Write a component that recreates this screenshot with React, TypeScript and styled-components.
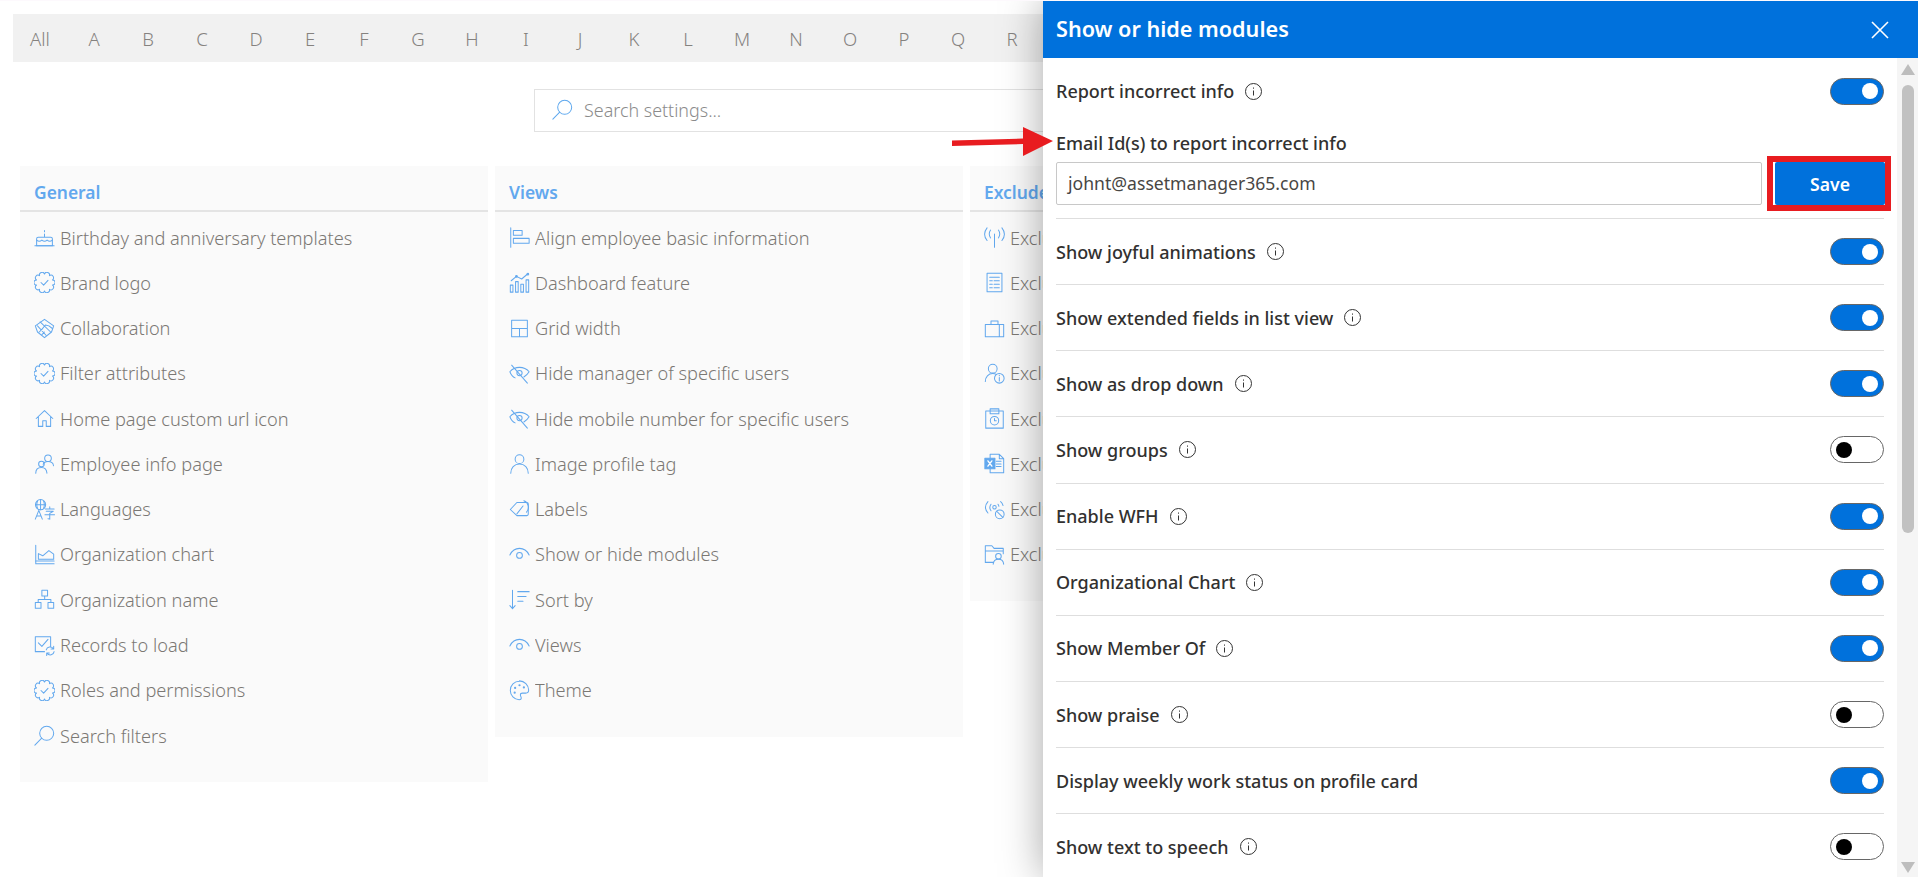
import React from "react";
import styled, { createGlobalStyle } from "styled-components";

const Global = createGlobalStyle`
  html, body { margin: 0; padding: 0; background: #fff; }
  body { border-top: 1px solid #fdf9fd; overflow: hidden; }
  * { box-sizing: border-box; }
`;
const FONT = `"Noto Sans", "Open Sans", "Liberation Sans", sans-serif`;

const Page = styled.div`
  position: relative;
  height: 876px;
  overflow: hidden;
  font-family: ${FONT};
`;
const Backdrop = styled.main`
  width: 1043px;
  overflow: hidden;
`;
const AlphaBar = styled.div`
  display: flex;
  align-items: center;
  height: 48px;
  margin: 13px 0 0 13px;
  background: #f1f1f1;
`;
const AlphaItem = styled.span`
  flex: 0 0 54px;
  text-align: center;
  font-size: 18.5px;
  font-weight: 300;
  color: #85827f;
`;
const SearchBox = styled.div`
  display: flex;
  align-items: center;
  gap: 11px;
  width: 850px;
  height: 43px;
  margin: 27px 0 0 534px;
  padding: 0 0 2px 17px;
  border: 1px solid #e2e2e2;
  background: #fff;
  color: #5ea8ee;
`;
const SearchText = styled.span`
  font-size: 17.9px;
  font-weight: 300;
  color: #8b8b8b;
  white-space: nowrap;
`;
const Cards = styled.div`
  display: grid;
  grid-template-columns: 468px 468px 73px;
  gap: 7px;
  align-items: start;
  margin-top: 34px;
  padding-left: 20px;
`;
const Card = styled.section`
  min-width: 0;
  overflow: hidden;
  background: #fafafa;
  padding-bottom: 24px;
`;
const CardTitle = styled.h3`
  height: 46px;
  margin: 0 0 3px;
  padding: 14px 0 0 14px;
  border-bottom: 2px solid #e4e4e4;
  font-size: 17.4px;
  line-height: 24px;
  font-weight: 600;
  color: #62a8ee;
  white-space: nowrap;
  overflow: hidden;
`;
const Item = styled.div`
  display: flex;
  align-items: center;
  gap: 5px;
  height: 45.27px;
  padding-left: 14px;
  color: #62a8ee;
`;
const ItemText = styled.span`
  min-width: 0;
  overflow: hidden;
  font-size: 18.2px;
  font-weight: 300;
  color: #7b7874;
  white-space: nowrap;
`;
const Glyph = styled.svg`
  flex: 0 0 21px;
  width: 21px;
  height: 21px;
  fill: none;
  stroke: currentColor;
  stroke-width: 1.15;
  stroke-linecap: round;
  stroke-linejoin: round;
`;
const Panel = styled.aside`
  position: absolute;
  top: 0;
  right: 0;
  bottom: 0;
  width: 875px;
  display: flex;
  flex-direction: column;
  background: #fff;
  box-shadow: 0 0 40px rgba(0, 0, 0, 0.35);
`;
const PanelHeader = styled.header`
  display: flex;
  align-items: center;
  justify-content: space-between;
  flex: 0 0 57px;
  padding: 0 29px 0 13px;
  background: #0071dc;
  color: #fff;
`;
const PanelTitle = styled.h2`
  margin: -2px 0 0;
  font-size: 21.6px;
  font-weight: 600;
`;
const CloseIcon = styled.svg`
  width: 18px;
  height: 18px;
  stroke: #fff;
  stroke-width: 1.6;
`;
const PanelBody = styled.div`
  flex: 1;
  display: flex;
  min-height: 0;
`;
const PanelContent = styled.div`
  flex: 1;
  min-width: 0;
  padding: 0 13px;
  overflow: hidden;
`;
const Row = styled.div<{ $plain?: boolean }>`
  display: flex;
  align-items: center;
  justify-content: space-between;
  height: ${(p) => (p.$plain ? "66px" : "66.15px")};
  border-bottom: ${(p) => (p.$plain ? "none" : "1px solid #dedede")};
`;
const RowLabel = styled.div`
  display: flex;
  align-items: center;
  gap: 10px;
  font-size: 18px;
  font-weight: 500;
  color: #323130;
`;
const InfoIcon = styled.svg`
  width: 19px;
  height: 19px;
  fill: none;
  stroke: #333;
  stroke-width: 1;
`;
const Toggle = styled.span<{ $on: boolean }>`
  display: flex;
  align-items: center;
  justify-content: ${(p) => (p.$on ? "flex-end" : "flex-start")};
  width: 54px;
  height: 27px;
  padding: 0 5px;
  border: 1px solid #666;
  border-radius: 14px;
  background: ${(p) => (p.$on ? "#0071dc" : "#fff")};
`;
const Knob = styled.span<{ $on: boolean }>`
  width: 16px;
  height: 16px;
  border-radius: 50%;
  background: ${(p) => (p.$on ? "#fff" : "#000")};
`;
const EmailBlock = styled.div`
  padding: 7px 0 13px;
  border-bottom: 1px solid #dedede;
`;
const EmailLabel = styled.label`
  display: block;
  margin-bottom: 7px;
  font-size: 18px;
  line-height: 24px;
  font-weight: 500;
  color: #323130;
`;
const EmailRow = styled.div`
  display: flex;
  gap: 13px;
  margin-right: -1px;
`;
const EmailInput = styled.div`
  flex: 1;
  height: 43px;
  padding: 0 11px;
  border: 1px solid #c8c8c8;
  border-radius: 2px;
  font-size: 17.6px;
  line-height: 41px;
  color: #484644;
`;
const SaveButton = styled.button`
  position: relative;
  flex: 0 0 110px;
  height: 43px;
  border: 0;
  border-radius: 2px;
  background: #0071dc;
  color: #fff;
  font-family: ${FONT};
  font-size: 17.6px;
  font-weight: 600;
`;
const Highlight = styled.span`
  position: absolute;
  top: -6px;
  bottom: -6px;
  left: -8px;
  right: -6px;
  border: 6px solid #e81c20;
`;
const ArrowMark = styled.svg`
  position: absolute;
  left: 952px;
  top: 124px;
  width: 102px;
  height: 32px;
  fill: #e81c20;
`;
const ScrollTrack = styled.div`
  flex: 0 0 21px;
  display: flex;
  flex-direction: column;
  align-items: center;
  padding: 6px 0 4px 1px;
  background: #f5f5f5;
`;
const ScrollThumb = styled.div`
  width: 12px;
  height: 448px;
  margin-top: 10px;
  border-radius: 6px;
  background: #c1c1c1;
`;
const ScrollArrow = styled.svg<{ $down?: boolean }>`
  width: 14px;
  height: 11px;
  fill: #bdbdbd;
  margin-top: ${(p) => (p.$down ? "auto" : "0")};
`;

const scallop = (() => {
  const n = 10;
  const R = 9.6;
  const pts = Array.from({ length: n }, (_, i) => {
    const a = (i / n) * Math.PI * 2 - Math.PI / 2;
    return [12 + R * Math.cos(a), 12 + R * Math.sin(a)];
  });
  const r = 2.9;
  return (
    `M${pts[0][0].toFixed(2)} ${pts[0][1].toFixed(2)}` +
    pts
      .slice(1)
      .concat([pts[0]])
      .map((p) => `A${r} ${r} 0 0 1 ${p[0].toFixed(2)} ${p[1].toFixed(2)}`)
      .join("") +
    "Z"
  );
})();

const badge = (
  <>
    <path d={scallop} />
    <path d="m8 12 3 3 5-5.500" />
  </>
);
const eye = (
  <>
    <path d="M1 12.500C3.500 7.500 7.500 5 12 5s8.500 2.500 11 7.500" />
    <circle cx="12" cy="13" r="3.300" />
  </>
);
const eyeOff = (
  <>
    <path d="M1 10c3-3.500 7-5 11-5s8 1.500 11 5c-1.500 2.500-3.500 4.500-6 6M7 17c-2.500-1-4.500-3-6-7" />
    <circle cx="12" cy="11.500" r="3" />
    <path d="M3 2.500 21 23" />
  </>
);
const icons: Record<string, React.ReactNode> = {
  cake: (
    <>
      <path d="M1 21.500h22M3 21V13.500c0-1 .8-1.800 1.800-1.800h14.400c1 0 1.800.8 1.800 1.800V21M12 8v3.500M12 4v1.500" />
      <path d="M3 15c2 1.800 4 1.800 6 0 2 1.800 4 1.800 6 0 2 1.800 4 1.800 6 0M3 21.500h18" />
    </>
  ),
  badge,
  shake: (
    <>
      <path d="M12 1.500 22.500 9 20 16 12 22.500 4 16 1.500 9Z" />
      <path d="M7 4.500 19 16M4 9l10 11M9 13l4-5 4 1 4 3M6 16l3-3M9 19l3-3" />
    </>
  ),
  home: <path d="M2.500 12 12 3l9.500 9M5 10v11h5v-6.500h4V21h5V10" />,
  people: (
    <>
      <circle cx="16" cy="6" r="3.800" />
      <path d="M10.500 13c.5-2 2.500-3.300 5.500-3.300 3.800 0 6 2 6.300 4.800" />
      <circle cx="8.500" cy="12.500" r="3.200" />
      <path d="M2 23c0-4 2.500-6.500 6.500-6.500s6 2.500 6.300 6.500" />
    </>
  ),
  lang: (
    <>
      <circle cx="7.500" cy="6.500" r="5.800" />
      <path d="M1.700 6.500h11.600M7.500.7v11.600M4 2.500c-1 2.500-1 5.500 0 8M11 2.500c1 2.500 1 5.500 0 8" />
      <path d="M1.500 23 5.500 13l4 10M3 19.500h5M13 11.500h10M18 9v2M14 14h8l-4 2.500V23l-2-.5M12.500 18h11" />
    </>
  ),
  areachart: (
    <>
      <path d="M2 1.500V22.500H23" />
      <path d="M2 19.500h21M5 17.500V11l5 2.500 7-6 5.500 4v6Z" />
    </>
  ),
  org: (
    <path d="M9 1.500h6.500V8H9ZM1.500 15.500H8V22H1.500ZM16 15.500h6.500V22H16ZM12.200 8v4M4.800 15.500V12h14.500v3.500" />
  ),
  records: (
    <>
      <path d="M19 13V2H1.500v17H12" />
      <path d="m5 9 4 4 7-8" />
      <path d="M14 17a4.500 4.500 0 0 1 8-1.500M23 19a4.500 4.500 0 0 1-8 2M22.500 13v3h-3M14.500 23.500v-3h3" />
    </>
  ),
  search: (
    <>
      <circle cx="14.500" cy="9.500" r="8" />
      <path d="M8.800 15 1 23" />
    </>
  ),
  align: (
    <path d="M2 1v22M5 4h10v5.500H5ZM5 13h18v5.500H5Z" />
  ),
  dash: (
    <>
      <path d="M1.500 15h3v8h-3ZM7.500 11h3v12h-3ZM13.500 14h3v9h-3ZM19.500 9h3v14h-3Z" />
      <path d="M2.500 10 8.500 5l6 3 7-6" />
      <circle cx="8.500" cy="5" r="1" />
      <circle cx="21.500" cy="2.500" r="1" />
    </>
  ),
  grid: <path d="M3 2.500h18v19H3ZM3 12h18M12 12v9.500" />,
  eyeOff,
  user: (
    <>
      <circle cx="12" cy="7" r="5" />
      <path d="M2 23c0-6 4-10.500 10-10.500s10 4.500 10 10.500" />
    </>
  ),
  tag: (
    <>
      <path d="M1.500 12 9 4h11.500c1 0 1.500.5 1.500 1.500v12c0 1-.5 1.500-1.500 1.500H9Z" />
      <path d="M17 2a8 8 0 0 1 3 13M16 8 9 17" />
    </>
  ),
  eye,
  sort: (
    <path d="M4 1.500v21M1 19l3 3.500L7 19M10 3h13M10 8.500h9.500M10 14h6" />
  ),
  palette: (
    <>
      <path d="M12 1.500C6 1.500 1.500 6 1.500 12c0 5.500 4.500 10.500 10 10.500 2 0 2.500-1 2.500-2 0-1.500-1-2-1-3.500s1-2 2.500-2H19c2 0 3.500-1.500 3.500-3.500 0-5.500-5-10.500-10.500-10.500Z" />
      <circle cx="7" cy="9" r=".7" />
      <circle cx="12" cy="6" r=".7" />
      <circle cx="17" cy="8.500" r=".7" />
      <circle cx="6.500" cy="14.500" r=".7" />
    </>
  ),
  antenna: (
    <path d="M12 8v15M7.500 3.500c-2 3-2 6 0 9M16.500 3.500c2 3 2 6 0 9M3.500 1c-3.500 4.500-3.500 10 0 14.500M20.500 1c3.500 4.500 3.500 10 0 14.500" />
  ),
  doc: (
    <path d="M3.500 1.500h17v21h-17ZM6.500 6h11M6.500 10h3M11.500 10h6M6.500 14h3M11.500 14h6M6.500 18h3M11.500 18h6" />
  ),
  case: (
    <path d="M1.500 7.500h21v14h-21ZM8 7.500V3.500h8v4M17.500 7.500v14" />
  ),
  userInfo: (
    <>
      <circle cx="10" cy="6.500" r="5" />
      <path d="M1.500 21c0-5 3.500-9 8.500-9 1.500 0 3 .4 4 1" />
      <circle cx="17.500" cy="17.500" r="5.500" />
      <path d="M17.500 16.500v4M17.500 14v.6" />
    </>
  ),
  saveClock: (
    <>
      <path d="M2 3.500h20v19.500H2ZM7 3.500V1h10v5.500H7Z" />
      <circle cx="12" cy="14.500" r="4.800" />
      <path d="M12 12v2.500h2" />
    </>
  ),
  excel: (
    <>
      <path d="M7 6V1.500h10.500L22.500 6.500V22.500H7V18M17.500 1.500v5h5M14 9.500h5.500M14 12.500h5.500M14 15.500h5.500" />
      <path d="M1 6h11.500v12H1Z" fill="currentColor" />
      <path d="m4.500 9 4.500 6M9 9l-4.500 6" stroke="#fff" strokeWidth="1.600" />
    </>
  ),
  broadcast: (
    <>
      <path d="M4.500 3c-3.500 4-3.500 9 0 13M8 6c-1.800 2.500-1.800 5 0 7.500M19 3c1.500 1.200 2.300 2.800 2.800 4.500M16 6c.5.700 1 1.500 1 2.200" />
      <circle cx="12" cy="9.500" r="2" />
      <circle cx="18" cy="17.500" r="5" />
      <path d="m14.500 14 7 7" />
    </>
  ),
  folderUser: (
    <>
      <path d="M11 21H1.500V2H9l2.500 3h10.500v6M1.500 8h20.500" />
      <circle cx="16.500" cy="14" r="3.200" />
      <path d="M10.500 23c.3-3 2.500-5.500 6-5.500s5.700 2.500 6 5.500" />
    </>
  ),
};

const Icon = ({ name }: { name: string }) => (
  <Glyph viewBox="0 0 24 24" aria-hidden="true">
    {icons[name]}
  </Glyph>
);

type Entry = [string, string];
const general: Entry[] = [
  ["cake", "Birthday and anniversary templates"],
  ["badge", "Brand logo"],
  ["shake", "Collaboration"],
  ["badge", "Filter attributes"],
  ["home", "Home page custom url icon"],
  ["people", "Employee info page"],
  ["lang", "Languages"],
  ["areachart", "Organization chart"],
  ["org", "Organization name"],
  ["records", "Records to load"],
  ["badge", "Roles and permissions"],
  ["search", "Search filters"],
];
const views: Entry[] = [
  ["align", "Align employee basic information"],
  ["dash", "Dashboard feature"],
  ["grid", "Grid width"],
  ["eyeOff", "Hide manager of specific users"],
  ["eyeOff", "Hide mobile number for specific users"],
  ["user", "Image profile tag"],
  ["tag", "Labels"],
  ["eye", "Show or hide modules"],
  ["sort", "Sort by"],
  ["eye", "Views"],
  ["palette", "Theme"],
];
const exclude: Entry[] = [
  ["antenna", "Exclude"],
  ["doc", "Exclude"],
  ["case", "Exclude"],
  ["userInfo", "Exclude"],
  ["saveClock", "Exclude"],
  ["excel", "Exclude"],
  ["broadcast", "Exclude"],
  ["folderUser", "Exclude"],
];
const columns: [string, Entry[]][] = [
  ["General", general],
  ["Views", views],
  ["Exclude", exclude],
];
const rows: [string, boolean, boolean][] = [
  ["Show joyful animations", true, true],
  ["Show extended fields in list view", true, true],
  ["Show as drop down", true, true],
  ["Show groups", false, true],
  ["Enable WFH", true, true],
  ["Organizational Chart", true, true],
  ["Show Member Of", true, true],
  ["Show praise", false, true],
  ["Display weekly work status on profile card", true, false],
  ["Show text to speech", false, true],
];

const Info = () => (
  <InfoIcon viewBox="0 0 19 19" aria-hidden="true">
    <circle cx="9.500" cy="9.500" r="8" />
    <path d="M9.500 8.500v5M9.500 5.500v1.200" />
  </InfoIcon>
);
const Switch = ({ on }: { on: boolean }) => (
  <Toggle $on={on}>
    <Knob $on={on} />
  </Toggle>
);

export default function App() {
  const letters = ["All", ..."ABCDEFGHIJKLMNOPQR"];
  return (
    <Page>
      <Global />
      <Backdrop>
        <AlphaBar>
          {letters.map((l) => (
            <AlphaItem key={l}>{l}</AlphaItem>
          ))}
        </AlphaBar>
        <SearchBox>
          <Glyph viewBox="0 0 24 24" aria-hidden="true">
            {icons.search}
          </Glyph>
          <SearchText>Search settings...</SearchText>
        </SearchBox>
        <Cards>
          {columns.map(([title, entries]) => (
            <Card key={title}>
              <CardTitle>{title}</CardTitle>
              {entries.map(([icon, text], i) => (
                <Item key={i}>
                  <Icon name={icon} />
                  <ItemText>{text}</ItemText>
                </Item>
              ))}
            </Card>
          ))}
        </Cards>
      </Backdrop>
      <Panel>
        <PanelHeader>
          <PanelTitle>Show or hide modules</PanelTitle>
          <CloseIcon viewBox="0 0 18 18" aria-hidden="true">
            <path d="M1 1l16 16M17 1 1 17" />
          </CloseIcon>
        </PanelHeader>
        <PanelBody>
          <PanelContent>
            <Row $plain>
              <RowLabel>
                Report incorrect info
                <Info />
              </RowLabel>
              <Switch on />
            </Row>
            <EmailBlock>
              <EmailLabel>Email Id(s) to report incorrect info</EmailLabel>
              <EmailRow>
                <EmailInput>johnt@assetmanager365.com</EmailInput>
                <SaveButton>
                  Save
                  <Highlight />
                </SaveButton>
              </EmailRow>
            </EmailBlock>
            {rows.map(([label, on, info]) => (
              <Row key={label}>
                <RowLabel>
                  {label}
                  {info && <Info />}
                </RowLabel>
                <Switch on={on} />
              </Row>
            ))}
          </PanelContent>
          <ScrollTrack>
            <ScrollArrow viewBox="0 0 14 11" aria-hidden="true">
              <path d="M7 0 14 11H0Z" />
            </ScrollArrow>
            <ScrollThumb />
            <ScrollArrow $down viewBox="0 0 14 11" aria-hidden="true">
              <path d="M7 11 0 0H14Z" />
            </ScrollArrow>
          </ScrollTrack>
        </PanelBody>
      </Panel>
      <ArrowMark viewBox="0 0 102 32" aria-hidden="true">
        <path d="M0 15.500 71 13.500V2L101 16 71 31V19L0 21Z" />
      </ArrowMark>
    </Page>
  );
}
